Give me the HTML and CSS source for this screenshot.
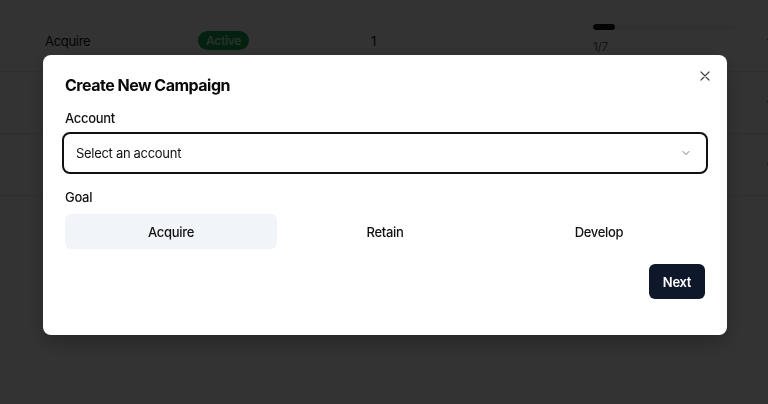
FILE: index.html
```html
<!DOCTYPE html>
<html lang="en">
<head>
<meta charset="utf-8">
<title>Create New Campaign</title>
<link rel="stylesheet" href="styles.css">
</head>
<body>
<main class="page">
  <div class="table">
    <div class="row">
      <div class="cell c-goal">Acquire</div>
      <div class="cell c-status"><span class="badge">Active</span></div>
      <div class="cell c-num">1</div>
      <div class="cell c-prog">
        <div class="track"><div class="fill" style="width:15%"></div></div>
        <div class="prog-label">1/7</div>
      </div>
      <div class="cell c-chev">
        <svg width="12" height="12" viewBox="0 0 24 24" fill="none" stroke="#111" stroke-width="2.5" stroke-linecap="round" stroke-linejoin="round"><path d="M6 9l6 6 6-6"/></svg>
      </div>
    </div>
    <div class="row">
      <div class="cell c-goal"></div>
      <div class="cell c-status"></div>
      <div class="cell c-num"></div>
      <div class="cell c-prog"></div>
      <div class="cell c-chev">
        <svg width="12" height="12" viewBox="0 0 24 24" fill="none" stroke="#111" stroke-width="2.5" stroke-linecap="round" stroke-linejoin="round"><path d="M6 9l6 6 6-6"/></svg>
      </div>
    </div>
    <div class="row">
      <div class="cell c-goal"></div>
      <div class="cell c-status"></div>
      <div class="cell c-num"></div>
      <div class="cell c-prog"></div>
      <div class="cell c-chev">
        <svg width="12" height="12" viewBox="0 0 24 24" fill="none" stroke="#111" stroke-width="2.5" stroke-linecap="round" stroke-linejoin="round"><path d="M6 9l6 6 6-6"/></svg>
      </div>
    </div>
  </div>
</main>

<div class="overlay">
  <section class="modal" role="dialog" aria-labelledby="dlg-title">
    <button class="close" aria-label="Close">
      <svg width="10" height="10" viewBox="0 0 10 10" fill="none" stroke="#444" stroke-width="1.2" stroke-linecap="round"><path d="M1 1l8 8M9 1L1 9"/></svg>
    </button>
    <h2 id="dlg-title" class="title">Create New Campaign</h2>
    <label class="label">Account</label>
    <div class="select">
      <span>Select an account</span>
      <svg width="12" height="12" viewBox="0 0 24 24" fill="none" stroke="#777" stroke-width="2" stroke-linecap="round" stroke-linejoin="round"><path d="M6 9l6 6 6-6"/></svg>
    </div>
    <label class="label goal-label">Goal</label>
    <div class="tabs">
      <button class="tab active">Acquire</button>
      <button class="tab">Retain</button>
      <button class="tab">Develop</button>
    </div>
    <div class="actions">
      <button class="next">Next</button>
    </div>
  </section>
</div>
</body>
</html>
```

FILE: styles.css
```css
* { box-sizing: border-box; }
html, body { margin: 0; padding: 0; }
body {
  font-family: Inter, "Noto Sans", "Liberation Sans", sans-serif;
  background: #fff;
  color: #111;
  width: 768px;
  height: 404px;
  overflow: hidden;
  letter-spacing: -0.3px;
}
.page { padding: 10px 0 0 0; }
.table { display: flex; flex-direction: column; }
.row {
  display: flex;
  align-items: center;
  height: 62px;
  border-bottom: 1px solid #e5e7eb;
  padding-left: 45px;
  font-size: 13px;
}
.cell { flex: none; }
.c-goal { width: 153px; }
.c-status { width: 173px; }
.c-num { width: 222px; }
.c-prog { width: 172px; margin-top: -3px; }
.c-chev { width: 20px; display: flex; justify-content: flex-start; }
.badge {
  display: inline-block;
  background: #16a34a;
  color: #bbf7d0;
  border-radius: 10px;
  padding: 2px 8px;
  font-size: 12px;
  font-weight: 600;
}
.track { width: 144px; height: 6px; border-radius: 3px; background: #f3f4f6; overflow: hidden; }
.fill { height: 100%; background: #111; border-radius: 3px; }
.prog-label { margin-top: 10px; color: #666; font-size: 12px; line-height: 14px; }

.overlay {
  position: fixed;
  inset: 0;
  background: rgba(0,0,0,0.8);
  display: flex;
  justify-content: center;
  align-items: flex-start;
  padding: 55px 0 0 2px;
}
.modal {
  position: relative;
  width: 684px;
  background: #fff;
  border-radius: 8px;
  padding: 20px 22px 36px 22px;
  box-shadow: 0 8px 20px rgba(0,0,0,0.25);
}
.close {
  position: absolute;
  top: 11px;
  right: 12px;
  width: 20px;
  height: 20px;
  border: 0;
  background: none;
  padding: 0;
  display: flex;
  align-items: center;
  justify-content: center;
}
.title {
  margin: 0;
  font-size: 16px;
  line-height: 20px;
  font-weight: 650;
  letter-spacing: -0.5px;
  color: #0a0a0a;
}
.label {
  display: block;
  margin-top: 15px;
  font-size: 13px;
  line-height: 16px;
  font-weight: 500;
  color: #111;
}
.select {
  margin: 6px -3px 0 -3px;
  height: 42px;
  border: 2px solid #111;
  border-radius: 8px;
  display: flex;
  align-items: center;
  justify-content: space-between;
  padding: 0 14px 0 12px;
  font-size: 13px;
  color: #111;
}
.goal-label { margin-top: 15px; }
.tabs {
  margin-top: 9px;
  display: grid;
  grid-template-columns: 1fr 1fr 1fr;
  gap: 2px;
}
.tab {
  height: 35px;
  border: 0;
  background: transparent;
  border-radius: 6px;
  font-family: inherit;
  letter-spacing: inherit;
  font-size: 13px;
  font-weight: 500;
  color: #111;
}
.tab.active { background: #f1f4f8; }
.actions { display: flex; justify-content: flex-end; margin-top: 15px; }
.next {
  height: 35px;
  width: 56px;
  border: 0;
  border-radius: 6px;
  background: #0f172a;
  color: #fff;
  font-family: inherit;
  letter-spacing: inherit;
  font-size: 13px;
  font-weight: 600;
}
```
